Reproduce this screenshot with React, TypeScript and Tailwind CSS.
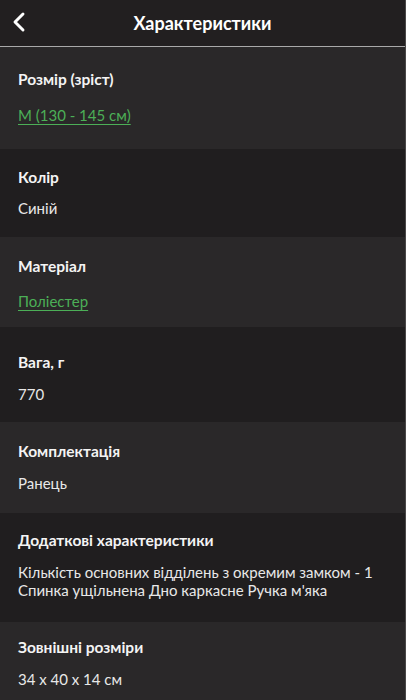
import { ChevronLeft } from 'lucide-react'

type Spec = {
    title: string
    value: string[]
    link?: boolean
    pad: string
    gap: string
}

const specs: Spec[] = [
    { title: 'Розмір (зріст)', value: ['М (130 - 145 см)'], link: true, pad: 'pt-[22px] pb-[24px]', gap: 'mt-[16px]' },
    { title: 'Колір', value: ['Синій'], pad: 'pt-[18px] pb-[19px]', gap: 'mt-[11px]' },
    { title: 'Матеріал', value: ['Поліестер'], link: true, pad: 'pt-[19px] pb-[16px]', gap: 'mt-[15px]' },
    { title: 'Вага, г', value: ['770'], pad: 'pt-[25px] pb-[18px]', gap: 'mt-[12px]' },
    { title: 'Комплектація', value: ['Ранець'], pad: 'pt-[19px] pb-[20px]', gap: 'mt-[12px]' },
    {
        title: 'Додаткові характеристики',
        value: ['Кількість основних відділень з окремим замком - 1', 'Спинка ущільнена Дно каркасне Ручка м\'яка'],
        pad: 'pt-[17px] pb-[23px]',
        gap: 'mt-[13px]',
    },
    { title: 'Зовнішні розміри', value: ['34 x 40 x 14 см'], pad: 'pt-[15px] pb-[20px]', gap: 'mt-[12px]' },
]

const SpecRow = ({ spec, index }: { spec: Spec; index: number }) => {
    const bg = index % 2 === 0 ? 'bg-[#2a2829]' : 'bg-[#201e1f]'
    return (
        <div className={`px-[18px] ${spec.pad} ${bg}`}>
            <h3 className="text-[15.5px] leading-[20px] font-bold text-[#f4f4f4]">{spec.title}</h3>
            {spec.link ? (
                <a className={`block ${spec.gap} text-[15px] leading-[20px] text-[#4caf57] underline underline-offset-[3px]`}>
                    {spec.value[0]}
                </a>
            ) : (
                <div className={spec.gap}>
                    {spec.value.map((line) => (
                        <p
                            key={line}
                            className={`text-[15px] text-[#e8e8e8] ${spec.value.length > 1 ? 'leading-[18px]' : 'leading-[20px]'}`}
                        >
                            {line}
                        </p>
                    ))}
                </div>
            )}
        </div>
    )
}

export default function App() {
    return (
        <div className="min-h-[700px] bg-[#2a2829] font-['Lato',sans-serif] border-r border-[#4a4848]">
            <header className="h-[47px] bg-[#221f20] flex items-center relative border-b border-[#a9a9a9]">
                <button className="absolute left-[3px] top-[6px] text-white">
                    <ChevronLeft className="w-8 h-8" strokeWidth={2.2} />
                </button>
                <h1 className="flex-1 text-center text-[18px] font-bold text-white">Характеристики</h1>
            </header>
            {specs.map((spec, i) => (
                <SpecRow key={spec.title} spec={spec} index={i} />
            ))}
        </div>
    )
}
